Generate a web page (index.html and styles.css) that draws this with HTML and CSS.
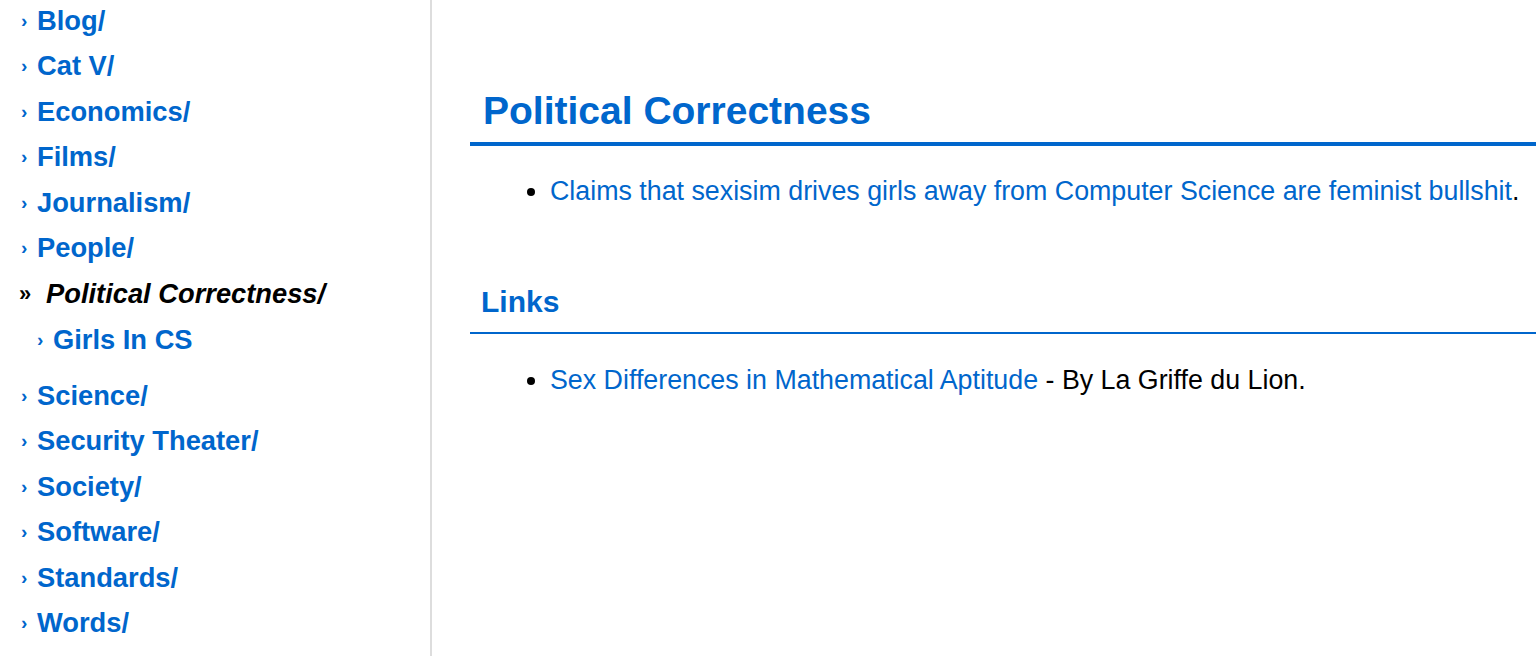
FILE: index.html
```html
<!DOCTYPE html>
<html lang="en">
<head>
    <meta charset="UTF-8">
    <meta name="viewport" content="width=device-width, initial-scale=1.0">
    <title>Political Correctness</title>
    <link rel="stylesheet" href="styles.css">
</head>
<body>
    <div class="page">
        <nav class="side-bar">
            <ul>
                <li><a href="#"><span class="arrow">›</span>Blog/</a></li>
                <li><a href="#"><span class="arrow">›</span>Cat V/</a></li>
                <li><a href="#"><span class="arrow">›</span>Economics/</a></li>
                <li><a href="#"><span class="arrow">›</span>Films/</a></li>
                <li><a href="#"><span class="arrow">›</span>Journalism/</a></li>
                <li><a href="#"><span class="arrow">›</span>People/</a></li>
                <li class="current"><a href="#"><span class="arrow">»</span><i>Political Correctness/</i></a>
                    <ul>
                        <li><a href="#"><span class="arrow">›</span>Girls In CS</a></li>
                    </ul>
                </li>
                <li><a href="#"><span class="arrow">›</span>Science/</a></li>
                <li><a href="#"><span class="arrow">›</span>Security Theater/</a></li>
                <li><a href="#"><span class="arrow">›</span>Society/</a></li>
                <li><a href="#"><span class="arrow">›</span>Software/</a></li>
                <li><a href="#"><span class="arrow">›</span>Standards/</a></li>
                <li><a href="#"><span class="arrow">›</span>Words/</a></li>
            </ul>
        </nav>

        <main class="content">
            <h1>Political Correctness</h1>
            <ul class="first">
                <li><a href="#">Claims that sexisim drives girls away from Computer Science are feminist bullshit</a>.</li>
            </ul>

            <h2>Links</h2>
            <ul>
                <li><a href="#">Sex Differences in Mathematical Aptitude</a> - By La Griffe du Lion.</li>
            </ul>
        </main>
    </div>
</body>
</html>
```

FILE: styles.css
```css
body {
    margin: 0;
    font-family: "Liberation Sans", Arial, sans-serif;
    color: #000;
    background-color: #fff;
}
a {
    color: #0066cc;
    text-decoration: none;
}
.page {
    display: flex;
    min-height: 656px;
}
.side-bar {
    width: 430px;
    flex-shrink: 0;
    border-right: 2px solid #dddddd;
}
.side-bar ul {
    list-style: none;
    margin: -2px 0 0 0;
    padding: 0;
}
.side-bar li a {
    display: flex;
    align-items: center;
    height: 45.5px;
    padding-left: 21px;
    font-size: 27.3px;
    font-weight: bold;
}
.side-bar .arrow {
    width: 16px;
    font-size: 19px;
}
.side-bar .current > a {
    color: #000;
    padding-left: 19px;
}
.side-bar .current > a .arrow {
    width: 27px;
    font-size: 22px;
}
.side-bar li ul {
    margin: 1px 0 10px 0;
}
.side-bar li ul a {
    padding-left: 37px;
}
.content {
    flex: 1;
    padding: 0 0 0 38px;
    font-size: 26.8px;
}
.content h1 {
    margin: 89px 0 0 0;
    padding: 0 0 9px 13px;
    font-size: 39px;
    color: #0066cc;
    border-bottom: 4px solid #0066cc;
}
.content h2 {
    margin: 78px 0 0 0;
    padding: 0 0 13px 11px;
    font-size: 30px;
    color: #0066cc;
    border-bottom: 2px solid #0066cc;
}
.content ul {
    margin: 30px 0 0 0;
    padding-left: 80px;
}
.content ul.first {
    margin-top: 29px;
}
.content li {
    line-height: 32px;
}
```
